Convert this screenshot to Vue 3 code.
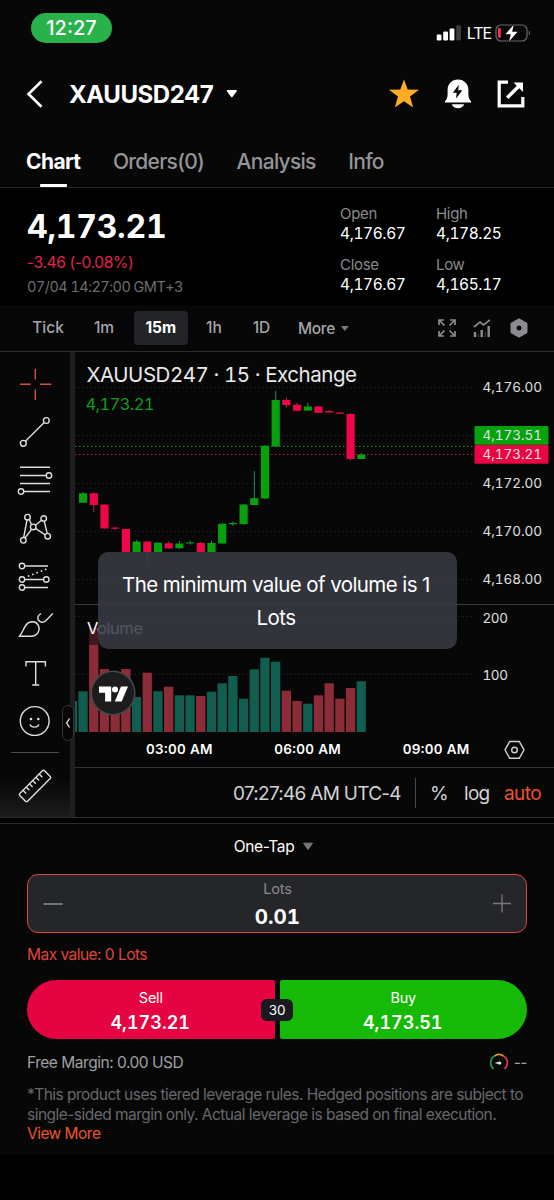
<template>
  <div class="screen">
    <header class="header">
      <div class="status-bar">
        <span class="clock">12:27</span>
        <div class="status-right">
          <svg class="signal" viewBox="0 0 26 16" width="26" height="16">
            <rect x="0.7" y="9.5" width="4.8" height="6" rx="1.2" fill="#fff" />
            <rect x="7.2" y="6.6" width="4.8" height="8.9" rx="1.2" fill="#fff" />
            <rect x="13.6" y="3.4" width="4.8" height="12.1" rx="1.2" fill="#fff" />
            <rect x="20.2" y="0.2" width="4.8" height="15.3" rx="1.2" fill="#3b3b3d" />
          </svg>
          <span class="network">LTE</span>
          <svg class="battery" viewBox="0 0 36 18" width="36" height="18">
            <rect x="1" y="1" width="31" height="16" rx="5" fill="none" stroke="#6b6b6d" stroke-width="1.2" />
            <path d="M33.8 6.5c1.7.8 1.7 4.2 0 5z" fill="#6b6b6d" />
            <rect x="3" y="4" width="2.8" height="10" rx="1.2" fill="#f5334a" />
            <path d="M18.8 0.8L10.4 10.3h5.4L14 17.4l8.6-9.7h-5.5z" fill="#fff" stroke="#070707" stroke-width="1.4" paint-order="stroke" />
          </svg>
        </div>
      </div>

      <div class="title-row">
        <svg class="back" viewBox="0 0 18 30" width="18" height="30">
          <path d="M15.5 2.2L2.5 15l13 12.8" fill="none" stroke="#fff" stroke-width="2.6" />
        </svg>
        <h1>XAUUSD247</h1>
        <svg class="title-caret" viewBox="0 0 12 10" width="12" height="10">
          <path d="M1.5 1.8h8.6L5.8 7.5z" fill="#fff" stroke="#fff" stroke-width="1.6" stroke-linejoin="round" />
        </svg>
        <div class="title-actions">
          <svg viewBox="0 0 32 32" width="32" height="32">
            <path d="M16 1.4l3.7 10.1 11.3.3-9 6.7 3.2 11-9.2-6.2-9.2 6.2 3.2-11-9-6.7 11.3-.3z" fill="#ffac25" />
          </svg>
          <svg viewBox="0 0 28 30" width="28" height="30">
            <path d="M14 .5C8 .5 3.6 5 3.6 11v4.5c0 3-1 5-2.7 6.8v1.300h26.200v-1.300c-1.700-1.800-2.700-3.800-2.700-6.800V11C24.400 5 20 .5 14 .5z" fill="#fff" />
            <path d="M7.800 25.200h12.400c-1 2.500-3.400 4-6.200 4s-5.200-1.500-6.200-4z" fill="#fff" />
            <path d="M14.800 5.800L8.800 13.800h3.900l-.7 5.700 6.400-8.300h-4.200z" fill="#070707" />
          </svg>
          <svg viewBox="0 0 28 28" width="28" height="28">
            <path d="M11 2.200H2.200v23.600h23.600V17" fill="none" stroke="#fff" stroke-width="3.200" />
            <path d="M10.200 17.800L21.500 6.500" fill="none" stroke="#fff" stroke-width="3.400" />
            <path d="M16.500 2.500H26V12z" fill="#fff" />
          </svg>
        </div>
      </div>

      <nav class="tabs">
        <a v-for="tab in tabs" :key="tab" :class="{ active: tab === activeTab }" @click="activeTab = tab">{{ tab }}</a>
      </nav>
    </header>

    <section class="quote">
      <div class="quote-main">
        <div class="price">4,173.21</div>
        <div class="change">-3.46 (-0.08%)</div>
        <div class="time">07/04 14:27:00 GMT+3</div>
      </div>
      <dl class="stats">
        <div v-for="stat in stats" :key="stat.label">
          <dt>{{ stat.label }}</dt>
          <dd>{{ stat.value }}</dd>
        </div>
      </dl>
    </section>

    <div class="intervals">
      <button v-for="item in intervals" :key="item" :class="{ active: item === activeInterval }" @click="activeInterval = item">
        <span>{{ item }}</span>
      </button>
      <div class="more">
        More
        <svg viewBox="0 0 10 7" width="10" height="7"><path d="M.8 1h8L4.8 6z" fill="#77787d" /></svg>
      </div>
      <div class="interval-tools">
        <svg viewBox="0 0 18 18" width="18" height="18" fill="none" stroke="#8b8c91" stroke-width="1.7">
          <path d="M1 6V1h5M1 1l5.500 5.500M12 1h5v5M17 1l-5.500 5.500M1 12v5h5M1 17l5.500-5.500M12 17h5v-5M17 17l-5.500-5.500" />
        </svg>
        <svg viewBox="0 0 18 18" width="18" height="18" fill="none" stroke="#8b8c91">
          <path d="M1 8l6-5 3.500 3L17 .8" stroke-width="1.700" />
          <path d="M2 13v5M8.700 11v7M15.700 7v11" stroke-width="2.400" />
          <path d="M5.300 15v3M12.200 13v5" stroke-width="1" opacity="0.500" />
        </svg>
        <svg viewBox="0 0 18 20" width="18" height="20">
          <path fill-rule="evenodd" d="M9 .8l8 4.500v9.400l-8 4.500-8-4.500V5.300zM9 7a3 3 0 1 0 0 6 3 3 0 0 0 0-6z" fill="#8b8c91" stroke="#8b8c91" stroke-linejoin="round" />
        </svg>
      </div>
    </div>

    <section class="chart">
      <aside class="tools">
        <svg class="accent" viewBox="0 0 36 36"><path d="M3 18.300h10.700M23 18.300h11.200M18.300 3v10.500M18.300 23.300V34" /></svg>
        <svg viewBox="0 0 36 36">
          <circle cx="29.300" cy="6.500" r="2.900" /><circle cx="6.300" cy="29.300" r="2.900" />
          <path d="M8.400 27.200L27.200 8.600" />
        </svg>
        <svg viewBox="0 0 36 36">
          <path d="M3 5.300h30M3 13.500h26M3 21.500h30M7 29.500h26" />
          <circle cx="32" cy="13.500" r="2.700" /><circle cx="4" cy="29.500" r="2.700" />
        </svg>
        <svg viewBox="0 0 36 36">
          <path d="M10 9L6.700 26.500M12.200 8.300l2.300 5.200M18.500 14.300l6-5M27.200 10.300l3 12M28.300 23.800l-10-6.500M14.500 18.300L8 27" />
          <circle cx="10.500" cy="6.200" r="2.800" /><circle cx="26.700" cy="7.500" r="2.800" /><circle cx="16.200" cy="15.900" r="2.800" />
          <circle cx="6.300" cy="29.300" r="2.800" /><circle cx="30.700" cy="25.200" r="2.800" />
        </svg>
        <svg viewBox="0 0 36 36">
          <path d="M8 7h23M8 20.500h18M8 28.500h23" />
          <circle cx="5" cy="7" r="2.700" /><circle cx="5" cy="20.500" r="2.700" /><circle cx="29.300" cy="20.500" r="2.700" /><circle cx="5" cy="28.500" r="2.700" />
          <path class="dots" d="M11.500 17L31 9.500" />
        </svg>
        <svg viewBox="0 0 36 36">
          <path d="M2.500 29.200C5.500 25.500 6.500 21.500 9 18c3-4 9.500-4.500 12-.2 3 5.500-.8 11.400-7 11.400z" />
          <path d="M24.200 6.700C20.800 8 19.800 11 21.800 13.500c2 2.500 5 2.200 7 .3L35.800 6.500" />
        </svg>
        <svg viewBox="0 0 36 36"><path d="M9 11.500V6.800h19.400v4.700M18.700 6.800V30M15.200 30h7" /></svg>
        <svg viewBox="0 0 36 36">
          <circle cx="17.700" cy="18" r="14.400" />
          <path d="M13 21.500c1.500 3.500 7.500 3.500 9 0" />
          <circle class="solid" cx="14" cy="16" r="1.300" /><circle class="solid" cx="21.300" cy="16" r="1.300" />
        </svg>
        <hr />
        <svg viewBox="0 0 36 36">
          <g transform="rotate(-45 18 18)">
            <rect x="0.500" y="12.500" width="35" height="11" rx="1.500" />
            <path d="M6.500 12.500v4.500M11 12.500v4.500M15.600 12.500v4.500M20.200 12.500v4.500M24.800 12.500v4.500M29.400 12.500v4.500" />
          </g>
        </svg>
        <div class="collapse">
          <svg viewBox="0 0 6 12"><path d="M4.500 1.500L1.700 6l2.800 4.500" /></svg>
        </div>
      </aside>

      <div class="plot-area">
        <svg class="plot" viewBox="75 352 479 415" width="479" height="415">
          <g class="grid">
            <line v-for="y in gridLines" :key="y" x1="75" :y1="y" x2="475" :y2="y" />
          </g>
          <line class="pane-line" x1="75" y1="604.500" x2="554" y2="604.500" />

          <rect
            v-for="(bar, i) in volumes"
            :key="'v' + i"
            :class="bar[0] ? 'vol-up' : 'vol-down'"
            :x="centerX(i) - 4.7"
            :y="bar[1]"
            width="9.3"
            :height="732 - bar[1]"
          />
          <rect class="vol-up" x="75" y="701" width="2" height="31" />
          <rect class="legend-shade" x="86" y="615" width="14" height="30" />

          <line class="bid" x1="75" y1="446.500" x2="475" y2="446.500" />
          <line class="ask" x1="75" y1="454.500" x2="475" y2="454.500" />

          <g v-for="(c, i) in candles" :key="'c' + i">
            <line :class="c.up ? 'wick-up' : 'wick-down'" :x1="centerX(i)" :x2="centerX(i)" :y1="c.high" :y2="c.low" />
            <rect :class="c.up ? 'up' : 'down'" :x="centerX(i) - 4.1" :y="c.top" width="8.2" :height="c.bottom - c.top" />
          </g>

          <text class="symbol" x="86.500" y="382" textLength="270.500">XAUUSD247 · 15 · Exchange</text>
          <text class="last" x="85.500" y="410" textLength="69">4,173.21</text>
          <text class="volume-label" x="87" y="634" textLength="56">Volume</text>

          <text v-for="p in priceLabels" :key="p.text" class="axis" x="482.500" :y="p.y" :textLength="p.w">{{ p.text }}</text>
          <rect x="474.500" y="426" width="74" height="18.800" rx="1" fill="#04a30d" />
          <rect x="474.500" y="445" width="74" height="18.800" rx="1" fill="#ea0544" />
          <text class="axis" x="482.500" y="440" textLength="59.500">4,173.51</text>
          <text class="axis" x="482.500" y="459" textLength="59.500">4,173.21</text>

          <text class="time-label" x="146" y="754.300" textLength="66.500">03:00 AM</text>
          <text class="time-label" x="274.300" y="754.300" textLength="66.500">06:00 AM</text>
          <text class="time-label" x="402.700" y="754.300" textLength="66.500">09:00 AM</text>
          <path class="hex" d="M509.700 741.500h9.600l4.700 8.300-4.700 8.500h-9.600l-4.700-8.500z" />
          <circle class="hex" cx="514.500" cy="750" r="2.800" />

          <circle cx="113" cy="693" r="21.800" fill="#1c1c1d" stroke="#48484a" stroke-width="1.600" />
          <path d="M99 686.500h12.200v15h-6.100v-8.800H99z" fill="#fff" />
          <circle cx="115" cy="689.500" r="3" fill="#fff" />
          <path d="M121 686.500h7l-6.300 15h-6.900z" fill="#fff" />
        </svg>

        <div class="chart-footer">
          <span class="utc">07:27:46 AM UTC-4</span>
          <span class="divider"></span>
          <span class="percent">%</span>
          <span class="log">log</span>
          <span class="auto">auto</span>
        </div>
      </div>

      <div class="toast">The minimum value of volume is 1<br />Lots</div>
    </section>

    <section class="trade">
      <div class="mode">
        <span>One-Tap</span>
        <svg viewBox="0 0 12 9" width="12" height="9"><path d="M1.500 1.200h9L6 7.500z" fill="#77787c" stroke="#77787c" stroke-linejoin="round" /></svg>
      </div>

      <div class="lots-input">
        <svg viewBox="0 0 20 20" width="20" height="20"><path d="M.5 10h19" stroke="#7b7c80" stroke-width="1.800" /></svg>
        <div class="lots-value">
          <label>Lots</label>
          <strong>0.01</strong>
        </div>
        <svg viewBox="0 0 20 20" width="20" height="20"><path d="M1 9.500h18M10 .5v18" stroke="#7b7c80" stroke-width="1.300" /></svg>
      </div>
      <div class="max-value">Max value: 0 Lots</div>

      <div class="order-buttons">
        <button class="sell">
          <span>Sell</span>
          <b>4,173.21</b>
        </button>
        <button class="buy">
          <span>Buy</span>
          <b>4,173.51</b>
        </button>
        <span class="spread">30</span>
      </div>

      <div class="margin-row">
        <span class="free">Free Margin: 0.00 USD</span>
        <div class="gauge">
          <svg viewBox="0 0 18 18" width="18" height="18" fill="none" stroke-width="1.700">
            <path d="M3.500 16A8 8 0 0 1 4.500 3" stroke="#1fa04b" />
            <path d="M4.500 3A8 8 0 0 1 13.500 3" stroke="#e6a531" />
            <path d="M13.500 3A8 8 0 0 1 14.500 16" stroke="#e8355a" />
            <path d="M4.500 10l5-1.600v3.200z" fill="#ddd" />
            <circle cx="9.800" cy="10" r="1.600" fill="#ddd" />
          </svg>
          <span>--</span>
        </div>
      </div>

      <p class="disclaimer">
        *This product uses tiered leverage rules. Hedged positions are subject to<br />
        single-sided margin only. Actual leverage is based on final execution.<br />
        <a>View More</a>
      </p>
    </section>
  </div>
</template>

<script setup>
import { ref } from 'vue'

const tabs = ['Chart', 'Orders(0)', 'Analysis', 'Info']
const activeTab = ref('Chart')

const intervals = ['Tick', '1m', '15m', '1h', '1D']
const activeInterval = ref('15m')

const stats = [
  { label: 'Open', value: '4,176.67' },
  { label: 'High', value: '4,178.25' },
  { label: 'Close', value: '4,176.67' },
  { label: 'Low', value: '4,165.17' }
]

const gridLines = [387.5, 435.5, 483.5, 531.5, 579.5, 616.5, 674.5]

const priceLabels = [
  { text: '4,176.00', y: 392, w: 59.5 },
  { text: '4,172.00', y: 488, w: 59.5 },
  { text: '4,170.00', y: 536, w: 59.5 },
  { text: '4,168.00', y: 583.5, w: 59.5 },
  { text: '200', y: 622.5, w: 25.5 },
  { text: '100', y: 679.5, w: 25.5 }
]

// [up, top, bottom, high, low]
const candles = [
  [1, 493.3, 502.7, 492, 503],
  [0, 493.3, 505, 492.5, 512],
  [0, 504.5, 528.5, 504.5, 528.5],
  [0, 527.5, 528.7, 526.8, 530],
  [0, 529, 552, 529, 552],
  [1, 541.5, 552, 540, 552],
  [0, 541.5, 552, 541, 565],
  [1, 542.7, 552, 542, 552],
  [0, 543.2, 548.4, 541.5, 549],
  [1, 543.5, 548.2, 541, 549],
  [1, 542.4, 543.5, 540.3, 544.7],
  [0, 543, 552, 542, 552],
  [1, 543, 552, 541, 552],
  [1, 523.8, 543.5, 522.5, 544],
  [1, 523, 524.2, 521.3, 526],
  [1, 504.5, 524.2, 504, 524.5],
  [1, 498.2, 505, 471, 505],
  [1, 445.7, 498.5, 445, 499],
  [1, 400, 446.5, 391, 447],
  [0, 400, 405, 397.7, 407.5],
  [0, 404.7, 410.8, 403, 411],
  [1, 406.5, 410.6, 403, 411],
  [0, 406.5, 412.8, 406, 413],
  [0, 411, 412.4, 410.3, 412.5],
  [0, 412.6, 413.8, 412, 414],
  [0, 414, 459, 413, 460.5],
  [1, 454.6, 459, 453, 459]
].map(([up, top, bottom, high, low]) => ({ up, top, bottom, high, low }))

const volumes = [
  [1, 691.3], [0, 628], [0, 669], [0, 674], [0, 669], [1, 697], [0, 672.7], [1, 691.3], [0, 686.7],
  [1, 695.3], [1, 695.3], [0, 696], [1, 691.7], [1, 683.3], [1, 676], [1, 698.7], [1, 669.3], [1, 657.7],
  [1, 661.7], [0, 690.7], [0, 701], [1, 703.7], [0, 695.3], [0, 683.3], [0, 698.7], [0, 688], [1, 681.3]
]

function centerX(i) {
  return 83.1 + i * 10.7
}
</script>

<style>
body {
  margin: 0;
  background: #000;
}
</style>

<style scoped>
.screen {
  width: 554px;
  height: 1200px;
  background: #000;
  color: #fff;
  font-family: Inter, "Liberation Sans", sans-serif;
  overflow: hidden;
}

.screen * {
  box-sizing: border-box;
}

svg {
  display: block;
  flex: none;
}

button {
  border: 0;
  padding: 0;
  background: none;
  color: inherit;
  font: inherit;
}

.header {
  height: 188px;
  background: #070707;
  border-bottom: 1px solid #222224;
}

.status-bar {
  height: 56px;
  display: flex;
  justify-content: space-between;
  align-items: flex-start;
  padding: 13px 23px 0 31px;
}

.clock {
  width: 81px;
  height: 30px;
  line-height: 30px;
  border-radius: 15px;
  background: #2ab24a;
  text-align: center;
  font-size: 20px;
  font-weight: 500;
}

.status-right {
  display: flex;
  align-items: center;
  margin-top: 11px;
}

.network {
  width: 33px;
  padding-left: 1px;
  text-align: center;
  font-size: 16px;
  line-height: 18px;
  letter-spacing: -1px;
}

.title-row {
  height: 76px;
  display: flex;
  align-items: center;
  padding: 0 29px 0 26px;
}

h1 {
  margin: 1px 0 0 25px;
  width: 146px;
  font-size: 24px;
  line-height: 30px;
  font-weight: 700;
  letter-spacing: -0.45px;
}

.title-caret {
  margin-left: 11px;
}

.title-actions {
  display: flex;
  align-items: center;
  gap: 25px;
  margin-left: auto;
}

.title-actions svg:first-child {
  margin-right: -1px;
}

.tabs {
  display: flex;
  gap: 32.5px;
  height: 55px;
  padding-left: 26px;
}

.tabs a {
  position: relative;
  padding-top: 17px;
  font-size: 21px;
  line-height: 26px;
  font-weight: 500;
  letter-spacing: -0.72px;
  color: #949498;
}

.tabs a.active {
  color: #fff;
  font-weight: 700;
  letter-spacing: -0.6px;
}

.tabs a.active::after {
  content: "";
  position: absolute;
  left: 50%;
  bottom: 0;
  width: 27px;
  height: 3px;
  margin-left: -13px;
  border-radius: 1px;
  background: #fff;
}

.quote {
  height: 117px;
  display: flex;
  justify-content: space-between;
  padding: 17px 0 0 27px;
}

.price {
  font-size: 32px;
  line-height: 44px;
  font-weight: 700;
  letter-spacing: -0.25px;
  font-variant-numeric: tabular-nums;
}

.change {
  margin-top: 2px;
  font-size: 15.5px;
  line-height: 24px;
  letter-spacing: -0.35px;
  color: #e3224f;
}

.time {
  font-size: 14.5px;
  line-height: 24px;
  letter-spacing: -0.55px;
  font-variant-numeric: tabular-nums;
  color: #6d6d71;
}

.stats {
  display: grid;
  grid-template-columns: 96px 118px;
  grid-auto-rows: 51px;
  margin: -1px 0 0;
}

.stats dt {
  font-size: 15px;
  line-height: 20px;
  letter-spacing: -0.3px;
  color: #8b8b8f;
}

.stats dd {
  margin: 0;
  font-size: 15.5px;
  line-height: 19px;
  letter-spacing: -0.4px;
  font-variant-numeric: tabular-nums;
}

.intervals {
  height: 46px;
  display: flex;
  align-items: center;
  padding: 0 26px 0 20px;
  background: #070708;
  font-size: 15.5px;
  font-weight: 500;
  letter-spacing: -0.35px;
  color: #a5a5a9;
}

.intervals button {
  width: 56px;
  padding: 0 1px;
}

.intervals button:nth-child(4) {
  width: 52px;
}

.intervals button:nth-child(5) {
  width: 43px;
}

.intervals button span {
  display: block;
  line-height: 34px;
  border-radius: 4px;
}

.intervals .active {
  padding: 0 0.5px 0 2px;
}

.intervals .active span {
  background: #232427;
  color: #fff;
  font-weight: 700;
}

.more {
  display: flex;
  align-items: center;
  margin-left: 15px;
}

.more svg {
  margin-left: 5px;
}

.interval-tools {
  display: flex;
  align-items: center;
  gap: 18px;
  margin-left: auto;
}

.interval-tools svg:nth-child(2) {
  margin: 0 1px 0 -1px;
}

.chart {
  position: relative;
  height: 467px;
  display: flex;
  background: #070707;
  border-top: 1px solid #2b2b2d;
  border-bottom: 1px solid #2b2b2d;
}

.tools {
  position: relative;
  width: 75px;
  padding: 14px 5px 0 0;
  border-right: 5px solid #1f1f23;
  background: linear-gradient(#070707 425px, #1b1b1c);
}

.tools > svg {
  width: 36px;
  height: 36px;
  margin: 0 0 12.2px 17px;
  overflow: visible;
}

.tools svg {
  fill: none;
  stroke: #dededf;
  stroke-width: 1.4;
}

.tools svg.accent {
  stroke: #d5503f;
}

.tools .dots {
  stroke-width: 1.8;
  stroke-dasharray: 0.1 4.5;
  stroke-linecap: round;
}

.tools .solid {
  fill: #dededf;
  stroke: none;
}

.tools hr {
  width: 48px;
  height: 1px;
  margin: 4px 0 15px 11px;
  border: 0;
  background: #4b4b4e;
}

.collapse {
  position: absolute;
  left: 61.5px;
  top: 353px;
  width: 12px;
  height: 36px;
  display: flex;
  align-items: center;
  justify-content: center;
  border: 1.5px solid #353538;
  border-radius: 6px;
  background: #070707;
}

.collapse svg {
  width: 6px;
  height: 12px;
}

.plot-area {
  flex: 1;
}

.plot {
  font-variant-numeric: tabular-nums;
}

.grid line {
  stroke: #29292b;
  stroke-dasharray: 1 3;
}

.pane-line {
  stroke: #3a3a3d;
}

.bid,
.ask {
  stroke-width: 1;
  stroke-dasharray: 1.5 2.5;
}

.bid {
  stroke: #1f8a28;
}

.ask {
  stroke: #c4184a;
}

.up {
  fill: #08a10c;
}

.down {
  fill: #ee0647;
}

.wick-up {
  stroke: #1e8a72;
}

.wick-down {
  stroke: #b3304a;
}

.vol-up {
  fill: #115d4f;
}

.vol-down {
  fill: #8b2c38;
}

.legend-shade {
  fill: #070707;
  opacity: 0.55;
}

.symbol {
  font-size: 20.5px;
  fill: #e9e9ea;
}

.last {
  font-size: 16.5px;
  fill: #0f9d19;
}

.volume-label {
  font-size: 16.5px;
  fill: #fff;
}

.axis {
  font-size: 13.5px;
  fill: #e0e0e1;
}

.time-label {
  font-size: 13.5px;
  font-weight: 600;
  fill: #fff;
}

.hex {
  fill: none;
  stroke: #d0d0d2;
  stroke-width: 1.4;
}

.chart-footer {
  height: 51px;
  display: flex;
  align-items: center;
  padding-left: 158px;
  border-top: 1px solid #333336;
  font-size: 19px;
  letter-spacing: -0.72px;
  color: #d2d2d4;
}

.utc {
  width: 182px;
  white-space: nowrap;
}

.divider {
  width: 1px;
  height: 30px;
  margin-right: 14px;
  background: #4a4a4d;
}

.percent {
  width: 34px;
}

.log {
  width: 40px;
}

.auto {
  letter-spacing: -0.6px;
  color: #ea5330;
}

.toast {
  position: absolute;
  left: 98px;
  top: 200px;
  width: 359px;
  height: 97px;
  padding: 17px 3px 0 0;
  border-radius: 10px;
  background: rgba(57, 59, 68, 0.88);
  text-align: center;
  font-size: 20.5px;
  line-height: 32.5px;
  letter-spacing: -0.58px;
}

.trade {
  height: 331px;
  margin-top: 5px;
  padding: 0 27px;
  background: #070707;
  border-top: 1px solid #2b2b2d;
}

.mode {
  display: flex;
  align-items: center;
  justify-content: center;
  gap: 8px;
  height: 45px;
  margin-bottom: 5px;
  padding-right: 6px;
  font-size: 15.5px;
  letter-spacing: -0.35px;
}

.lots-input {
  display: flex;
  align-items: center;
  justify-content: space-between;
  height: 59px;
  padding: 0 14px 0 15px;
  border: 1.5px solid #dc4738;
  border-radius: 11px;
  background: #25262a;
}

.lots-value {
  display: flex;
  flex-direction: column;
  align-items: center;
  margin-top: -1px;
}

.lots-value label {
  font-size: 14.5px;
  line-height: 26px;
  letter-spacing: -0.2px;
  color: #8b8c90;
}

.lots-value strong {
  font-size: 20.5px;
  line-height: 29px;
  font-weight: 700;
  font-variant-numeric: tabular-nums;
}

.max-value {
  height: 47px;
  padding-top: 11px;
  font-size: 15.5px;
  line-height: 22px;
  letter-spacing: -0.53px;
  color: #e0453c;
}

.order-buttons {
  position: relative;
  display: flex;
  gap: 5px;
}

.order-buttons button {
  flex: 1;
  height: 59px;
  display: flex;
  flex-direction: column;
  align-items: center;
  padding-top: 7px;
}

.order-buttons .sell {
  border-radius: 30px 2px 2px 30px;
  background: #e50441;
}

.order-buttons .buy {
  border-radius: 2px 30px 30px 2px;
  background: #16b906;
}

.order-buttons button span {
  font-size: 14.5px;
  line-height: 21px;
  letter-spacing: -0.25px;
}

.order-buttons b {
  padding-right: 1px;
  font-size: 18px;
  line-height: 29px;
  font-weight: 600;
  font-variant-numeric: tabular-nums;
}

.spread {
  position: absolute;
  left: 50%;
  top: 19px;
  width: 32px;
  height: 22px;
  margin-left: -16px;
  border-radius: 6px;
  background: #1a1a1e;
  text-align: center;
  font-size: 13.5px;
  line-height: 22px;
  letter-spacing: -0.3px;
}

.margin-row {
  display: flex;
  justify-content: space-between;
  align-items: center;
  height: 46px;
  font-size: 15.5px;
  letter-spacing: -0.48px;
  color: #a0a0a3;
}

.gauge {
  display: flex;
  align-items: center;
  gap: 6px;
}

.disclaimer {
  margin: 0;
  font-size: 15.5px;
  line-height: 19.5px;
  letter-spacing: -0.53px;
  color: #68686c;
  white-space: nowrap;
}

.disclaimer a {
  color: #ea5530;
}
</style>
